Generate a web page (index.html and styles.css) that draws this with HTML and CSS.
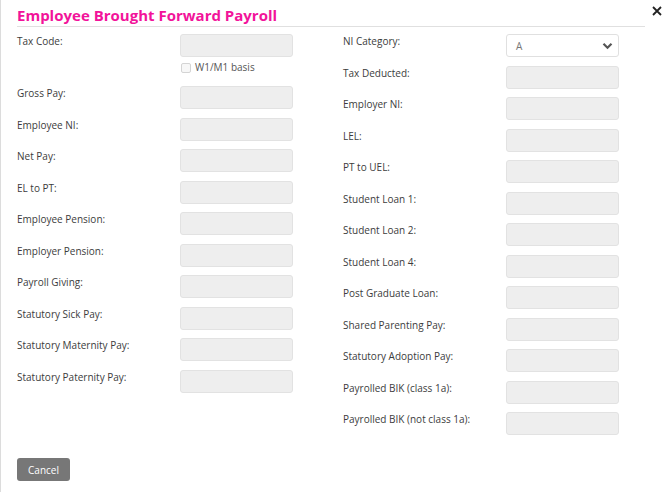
FILE: index.html
```html
<!DOCTYPE html>
<html>
<head>
<meta charset="utf-8">
<link rel="stylesheet" href="styles.css">
</head>
<body>
<div class="modal">
  <div class="header">
    <h1 class="title">Employee Brought Forward Payroll</h1>
    <button class="close" aria-label="Close">
      <svg width="10" height="10" viewBox="0 0 10 10"><path d="M1 1L9 9M9 1L1 9" stroke="#222" stroke-width="1.8" fill="none"/></svg>
    </button>
  </div>
  <div class="cols">
    <div class="col">
      <div class="row tall">
        <label class="lbl">Tax Code:</label>
        <div class="field">
          <div class="inp"></div>
          <div class="chk"><span class="box"></span><span class="chk-text">W1/M1 basis</span></div>
        </div>
      </div>
      <div class="row"><label class="lbl">Gross Pay:</label><div class="inp"></div></div>
      <div class="row"><label class="lbl">Employee NI:</label><div class="inp"></div></div>
      <div class="row"><label class="lbl">Net Pay:</label><div class="inp"></div></div>
      <div class="row"><label class="lbl">EL to PT:</label><div class="inp"></div></div>
      <div class="row"><label class="lbl">Employee Pension:</label><div class="inp"></div></div>
      <div class="row"><label class="lbl">Employer Pension:</label><div class="inp"></div></div>
      <div class="row"><label class="lbl">Payroll Giving:</label><div class="inp"></div></div>
      <div class="row"><label class="lbl">Statutory Sick Pay:</label><div class="inp"></div></div>
      <div class="row"><label class="lbl">Statutory Maternity Pay:</label><div class="inp"></div></div>
      <div class="row"><label class="lbl">Statutory Paternity Pay:</label><div class="inp"></div></div>
    </div>
    <div class="col">
      <div class="row"><label class="lbl">NI Category:</label>
        <div class="sel"><span>A</span>
          <svg width="11" height="8" viewBox="0 0 11 8"><path d="M1.5 1.8L5.5 5.8L9.5 1.8" stroke="#555" stroke-width="2.2" fill="none"/></svg>
        </div>
      </div>
      <div class="row"><label class="lbl">Tax Deducted:</label><div class="inp"></div></div>
      <div class="row"><label class="lbl">Employer NI:</label><div class="inp"></div></div>
      <div class="row"><label class="lbl">LEL:</label><div class="inp"></div></div>
      <div class="row"><label class="lbl">PT to UEL:</label><div class="inp"></div></div>
      <div class="row"><label class="lbl">Student Loan 1:</label><div class="inp"></div></div>
      <div class="row"><label class="lbl">Student Loan 2:</label><div class="inp"></div></div>
      <div class="row"><label class="lbl">Student Loan 4:</label><div class="inp"></div></div>
      <div class="row"><label class="lbl">Post Graduate Loan:</label><div class="inp"></div></div>
      <div class="row"><label class="lbl">Shared Parenting Pay:</label><div class="inp"></div></div>
      <div class="row"><label class="lbl">Statutory Adoption Pay:</label><div class="inp"></div></div>
      <div class="row"><label class="lbl">Payrolled BIK (class 1a):</label><div class="inp"></div></div>
      <div class="row"><label class="lbl">Payrolled BIK (not class 1a):</label><div class="inp"></div></div>
    </div>
  </div>
  <div class="footer">
    <button class="btn-cancel">Cancel</button>
  </div>
</div>
</body>
</html>
```
FILE: styles.css
```css
* { box-sizing: border-box; }
html, body { margin: 0; padding: 0; background: #fff; }
body {
  font-family: "Open Sans", "Liberation Sans", sans-serif;
  font-size: 10px;
  color: #333;
  width: 663px;
  height: 492px;
  overflow: hidden;
}
.modal {
  height: 492px;
  border-left: 1px solid #dcdcdc;
  padding: 0 0 0 16px;
  position: relative;
}
.header {
  width: 628px;
  height: 27px;
  border-bottom: 1px solid #e0e0e0;
  display: flex;
  align-items: flex-start;
}
.title {
  margin: 0;
  padding-top: 5px;
  font-size: 15px;
  font-weight: 700;
  line-height: 20px;
  color: #f2139a;
}
.close {
  position: absolute;
  right: 1px;
  top: 6px;
  border: 0;
  background: none;
  padding: 0;
  width: 10px;
  height: 10px;
  display: block;
}
.close svg { display: block; }
.cols {
  display: flex;
  padding-top: 7px;
}
.col {
  width: 326px;
  flex: none;
  display: flex;
  flex-direction: column;
}
.row {
  display: flex;
  height: 31.5px;
}
.row.tall { height: 52px; }
.lbl {
  width: 163px;
  flex: none;
  line-height: 14px;
  padding-top: 0;
  color: #3c3c3c;
}
.inp {
  width: 113px;
  height: 23px;
  background: #eeeeee;
  border: 1px solid #e2e2e2;
  border-radius: 3px;
}
.chk {
  display: flex;
  align-items: center;
  margin-top: 5px;
  height: 11px;
}
.box {
  width: 10px;
  height: 10px;
  border: 1px solid #d4d4d4;
  border-radius: 2px;
  background: #f7f7f7;
  margin-left: 1px;
  margin-right: 4px;
}
.chk-text { color: #555; line-height: 11px; }
.sel {
  width: 113px;
  height: 23px;
  background: #fff;
  border: 1px solid #e0e0e0;
  border-radius: 3px;
  display: flex;
  align-items: center;
  justify-content: space-between;
  padding: 0 5px 0 9px;
  color: #777;
  font-size: 10px;
}
.sel svg { display: block; }
.footer {
  position: absolute;
  left: 16px;
  top: 458px;
}
.btn-cancel {
  width: 53px;
  height: 23px;
  background: #777;
  color: #fff;
  border: 0;
  border-radius: 3px;
  font-family: "Open Sans", "Liberation Sans", sans-serif;
  font-size: 10px;
  padding: 0;
}
```
